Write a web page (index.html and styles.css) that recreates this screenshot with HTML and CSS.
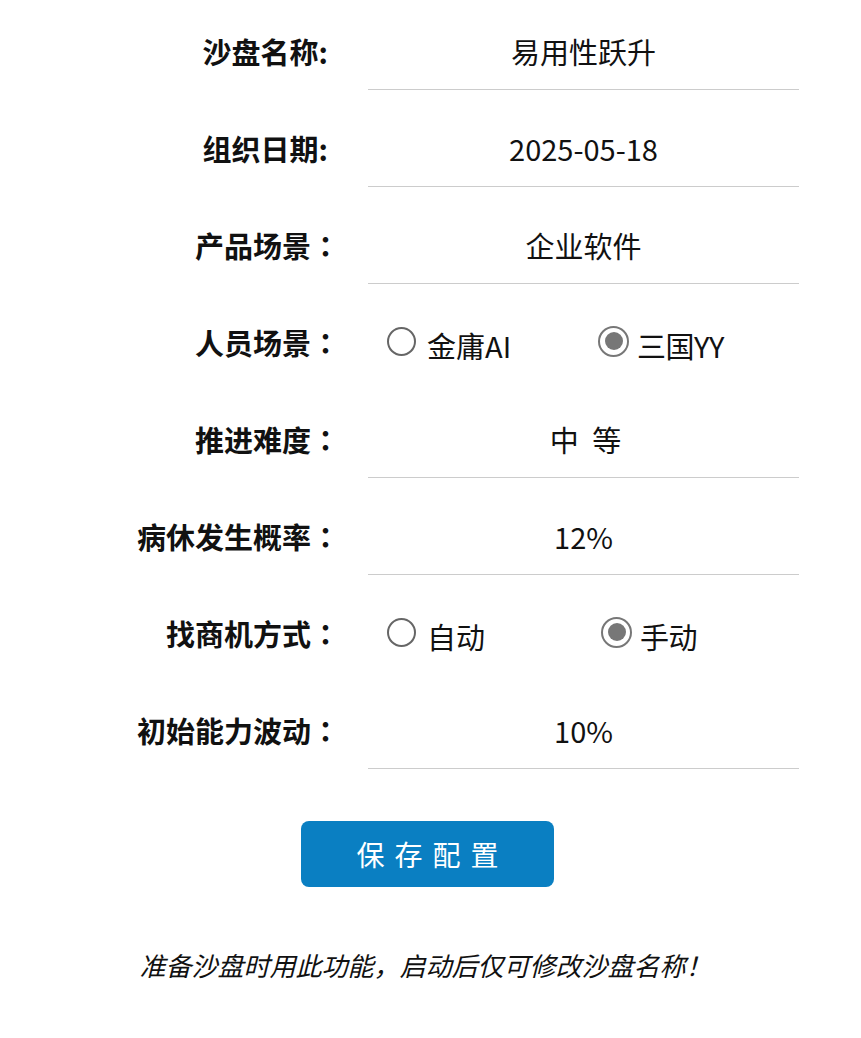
FILE: index.html
```html
<!DOCTYPE html>
<html lang="zh-CN">
<head>
    <meta charset="UTF-8">
    <title>沙盘配置</title>
    <link rel="stylesheet" href="styles.css">
</head>
<body>
    <div class="form">
        <div class="label label-half">沙盘名称:</div>
        <div class="value">易用性跃升</div>

        <div class="label label-half">组织日期:</div>
        <div class="value">2025-05-18</div>

        <div class="label">产品场景<span class="colon">：</span></div>
        <div class="value">企业软件</div>

        <div class="label">人员场景<span class="colon">：</span></div>
        <div class="choice">
            <label class="option"><span class="radio"></span>金庸AI</label>
            <label class="option"><span class="radio checked"></span>三国YY</label>
        </div>

        <div class="label">推进难度<span class="colon">：</span></div>
        <div class="value value-spaced">中 等</div>

        <div class="label">病休发生概率<span class="colon">：</span></div>
        <div class="value">12%</div>

        <div class="label">找商机方式<span class="colon">：</span></div>
        <div class="choice choice-wide">
            <label class="option"><span class="radio"></span>自动</label>
            <label class="option"><span class="radio checked"></span>手动</label>
        </div>

        <div class="label">初始能力波动<span class="colon">：</span></div>
        <div class="value">10%</div>
    </div>

    <div class="actions">
        <button class="save-btn">保存配置</button>
    </div>

    <p class="note">准备沙盘时用此功能，启动后仅可修改沙盘名称！</p>
</body>
</html>
```

FILE: styles.css
```css
*{
    box-sizing: border-box;
    margin: 0;
    padding: 0;
}
body{
    font-family: "Noto Sans CJK SC", "Noto Sans", sans-serif;
    color: #111;
    background: #fff;
}
.form{
    display: grid;
    grid-template-columns: 340px 431px;
    column-gap: 28px;
    row-gap: 19px;
    padding-top: 12px;
}
.label{
    height: 78px;
    display: flex;
    align-items: center;
    justify-content: flex-end;
    font-size: 29px;
    font-weight: bold;
}
/* 半角冒号的标签往左收一点 */
.label-half{
    padding-right: 12px;
}
.colon{
    font-family: "Noto Sans CJK JP", sans-serif;
}
.value{
    height: 78px;
    display: flex;
    align-items: center;
    justify-content: center;
    font-size: 29px;
    border-bottom: 1px solid #ccc;
}
.value-spaced{
    word-spacing: 7px;
    padding-left: 4px;
}
.choice{
    height: 78px;
    display: flex;
    align-items: center;
    padding-left: 19px;
    font-size: 29px;
}
.option{
    flex: none;
    width: 211px;
    display: flex;
    align-items: center;
    gap: 11px;
    padding-top: 6px;
}
.option:last-child{
    width: auto;
    gap: 8px;
    letter-spacing: -0.5px;
}
.choice-wide .option:first-child{
    width: 214px;
}
.radio{
    width: 29px;
    height: 29px;
    border: 2px solid #666;
    border-radius: 50%;
    display: flex;
    align-items: center;
    justify-content: center;
    margin-top: -8px;
}
.radio.checked{
    width: 31px;
    height: 31px;
    border-color: #777;
}
.radio.checked::after{
    content: "";
    width: 18px;
    height: 18px;
    border-radius: 50%;
    background-color: #777;
}
.actions{
    display: flex;
    justify-content: center;
    margin-top: 52px;
    padding-right: 6px;
}
.save-btn{
    width: 253px;
    height: 66px;
    border: none;
    border-radius: 8px;
    background-color: #0a7fc2;
    color: white;
    font-family: "Noto Sans CJK SC", sans-serif;
    font-size: 28px;
    font-weight: 400;
    letter-spacing: 10px;
    padding-left: 10px;
}
.note{
    margin-top: 60px;
    text-align: center;
    font-size: 26px;
    font-style: italic;
    line-height: 36px;
    padding-right: 10px;
}
```
